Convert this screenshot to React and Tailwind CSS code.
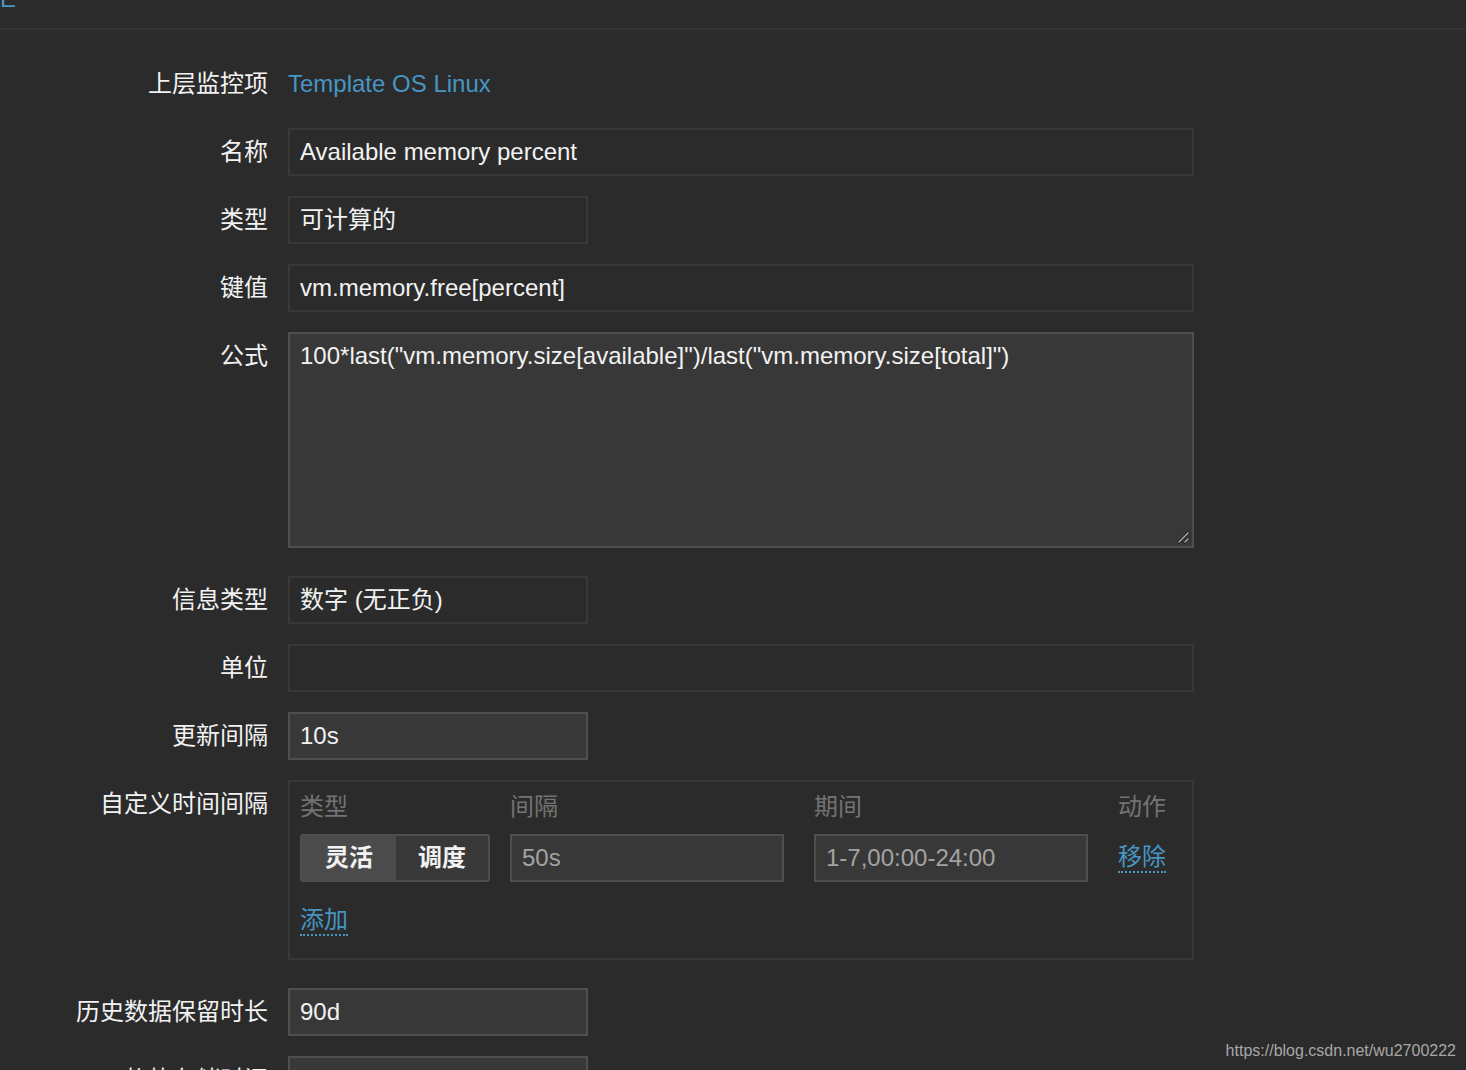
import React from "react";

const FONT = { fontFamily: '"Liberation Sans", "Noto Sans CJK SC", sans-serif' };

function Label({ children, top }) {
  return (
    <div
      className={`flex justify-end ${top ? "items-start" : "items-center"} h-12 text-[24px] leading-[48px] text-[#f2f2f2]`}
    >
      {children}
    </div>
  );
}

function ReadInput({ value, wide }) {
  return (
    <div
      className={`${wide ? "w-[906px]" : "w-[300px]"} h-12 border-2 border-[#383838] bg-[#2b2b2b] px-[10px] flex items-center text-[24px] text-[#f2f2f2] whitespace-nowrap`}
    >
      {value}
    </div>
  );
}

function EditInput({ value, wide, dim, w }) {
  return (
    <div
      className={`${w ? w : wide ? "w-[906px]" : "w-[300px]"} h-12 border-2 border-[#4f4f4f] bg-[#383838] px-[10px] flex items-center text-[24px] ${dim ? "text-[#a3a3a3]" : "text-[#f2f2f2]"} whitespace-nowrap`}
    >
      {value}
    </div>
  );
}

export default function App() {
  return (
    <div style={FONT} className="relative w-[1466px] h-[1070px] overflow-hidden bg-[#2b2b2b]">
      <div className="h-[30px] border-b-2 border-[#333333] relative overflow-hidden">
        <span className="absolute left-0 -top-[15px] text-[24px] leading-[28px] text-[#4796c4]">E</span>
      </div>

      <div className="pt-[30px] grid grid-cols-[268px_906px] gap-x-5">
        <Label>上层监控项</Label>
        <div className="h-12 flex items-center text-[24px] text-[#4796c4]">Template OS Linux</div>
        <div className="col-span-2 h-5" />

        <Label>名称</Label>
        <ReadInput value="Available memory percent" wide />
        <div className="col-span-2 h-5" />

        <Label>类型</Label>
        <ReadInput value="可计算的" />
        <div className="col-span-2 h-5" />

        <Label>键值</Label>
        <ReadInput value="vm.memory.free[percent]" wide />
        <div className="col-span-2 h-5" />

        <Label top>公式</Label>
        <div className="relative w-[906px] h-[216px] border-2 border-[#4f4f4f] bg-[#383838] px-[10px] pt-[6px] text-[24px] leading-[32px] text-[#f2f2f2] whitespace-nowrap">
          100*last("vm.memory.size[available]")/last("vm.memory.size[total]")
          <svg className="absolute right-[2px] bottom-[2px]" width="14" height="14" viewBox="0 0 14 14">
            <line x1="2" y1="13" x2="13" y2="2" stroke="#111" strokeWidth="2.5" />
            <line x1="2.5" y1="12.5" x2="12.5" y2="2.5" stroke="#bdbdbd" strokeWidth="1.2" />
            <line x1="8" y1="13" x2="13" y2="8" stroke="#111" strokeWidth="2.5" />
            <line x1="8.5" y1="12.5" x2="12.5" y2="8.5" stroke="#bdbdbd" strokeWidth="1.2" />
          </svg>
        </div>
        <div className="col-span-2 h-[28px]" />

        <Label>信息类型</Label>
        <ReadInput value="数字 (无正负)" />
        <div className="col-span-2 h-5" />

        <Label>单位</Label>
        <ReadInput value="" wide />
        <div className="col-span-2 h-5" />

        <Label>更新间隔</Label>
        <EditInput value="10s" />
        <div className="col-span-2 h-5" />

        <Label top>自定义时间间隔</Label>
        <div className="w-[906px] h-[180px] border-2 border-[#383838] px-[10px] pt-[11px]">
          <div className="grid grid-cols-[210px_304px_304px_1fr] text-[24px] leading-[28px] text-[#737373]">
            <div>类型</div>
            <div>间隔</div>
            <div>期间</div>
            <div>动作</div>
          </div>
          <div className="mt-[13px] grid grid-cols-[210px_304px_304px_1fr] items-start">
            <div className="w-[190px] h-12 flex rounded-[3px] border-2 border-[#4f4f4f] bg-[#383838] overflow-hidden text-[24px] text-[#f2f2f2] font-bold">
              <div className="w-[94px] bg-[#4b4b4b] flex items-center justify-center">灵活</div>
              <div className="flex-1 flex items-center justify-center">调度</div>
            </div>
            <EditInput value="50s" dim w="w-[274px]" />
            <EditInput value="1-7,00:00-24:00" dim w="w-[274px]" />
            <div className="h-12 flex items-center">
              <span className="text-[24px] leading-[28px] text-[#4796c4] border-b-2 border-dotted border-[#4796c4]">移除</span>
            </div>
          </div>
          <div className="mt-[24px] flex">
            <span className="text-[24px] leading-[28px] text-[#4796c4] border-b-2 border-dotted border-[#4796c4]">添加</span>
          </div>
        </div>
        <div className="col-span-2 h-[28px]" />

        <Label>历史数据保留时长</Label>
        <EditInput value="90d" />
        <div className="col-span-2 h-5" />

        <Label>趋势存储时间</Label>
        <EditInput value="365d" />
      </div>

      <div className="absolute right-[10px] top-[1040px] text-[16px] leading-[22px] text-[#a8a8a8]">
        https://blog.csdn.net/wu2700222
      </div>
    </div>
  );
}
